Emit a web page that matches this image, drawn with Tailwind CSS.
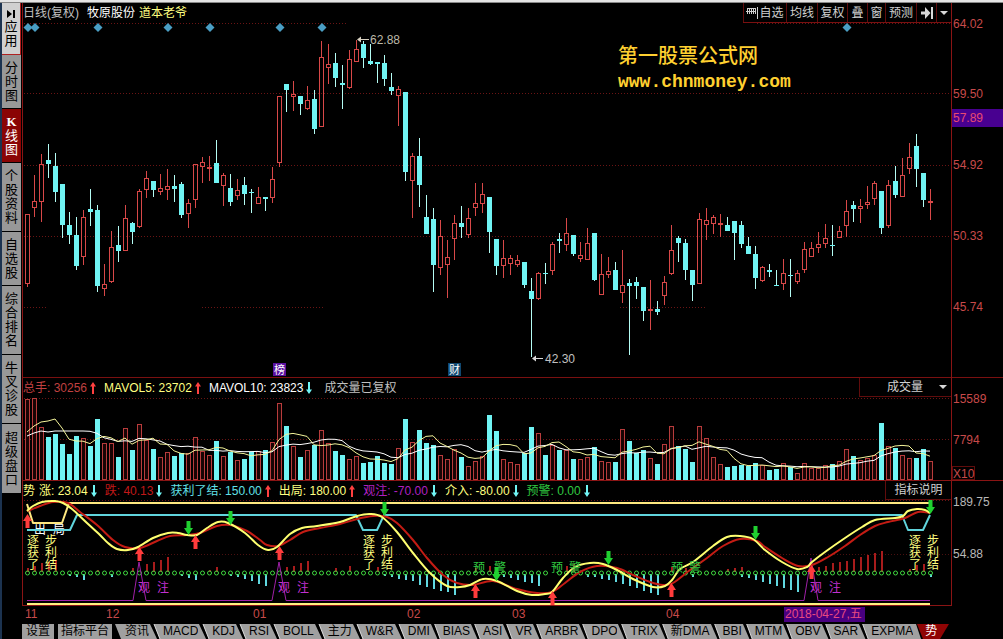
<!DOCTYPE html>
<html lang="zh-CN">
<head>
<meta charset="utf-8">
<meta name="viewport" content="width=device-width, initial-scale=1">
<title>牧原股份 日线</title>
<script src="https://cdn.jsdelivr.net/npm/@tailwindcss/browser@4"></script>
</head>
<body class="min-h-screen bg-black font-['Liberation_Sans','Noto_Sans_CJK_SC',sans-serif] text-xs text-[#c0c0c0]">
<svg class="hidden" aria-hidden="true">
  <symbol id="up" viewBox="0 0 6 12"><path d="M3 0L6 4.5H4V12H2V4.5H0Z" fill="#ff4040"/></symbol>
  <symbol id="down" viewBox="0 0 6 12"><path d="M3 12L6 7.5H4V0H2V7.5H0Z" fill="#70f4f4"/></symbol>
  <symbol id="slash" viewBox="0 0 14 15" preserveAspectRatio="none"><path d="M0 0H14V15H0Z" fill="#a0a0a0"/><path d="M1 0H5L11 15H8Z" fill="#000"/><path d="M5 0L11 15" stroke="#ddd" stroke-width="1"/></symbol>
</svg>
<div class="flex min-h-screen flex-col">
  <div class="h-[3px] shrink-0 border-b border-[#888] bg-[#e4e4e4]"></div>
  <div class="flex flex-1">
    <nav class="flex w-[22px] shrink-0 flex-col border-l-2 border-[#1c3350] pr-px text-[13px] leading-[14px] text-black">
      <button class="flex h-[52px] flex-col items-center justify-center border-b border-r border-[#b02020] bg-[#d0d0d0]">
        <svg class="mb-0.5 h-2 w-2" viewBox="0 0 8 8"><path d="M0 0L5 4L0 8ZM6 0H8V8H6Z"/></svg>
        <span class="w-[13px] break-all">应用</span></button>
      <button class="flex h-[54px] items-center justify-center border-b border-black bg-[#989898]"><span class="w-[13px] break-all">分时图</span></button>
      <button class="flex h-[54px] flex-col items-center justify-center border-b border-black bg-[#8a0404] text-white"><span class="font-['Liberation_Serif',serif] font-bold">K</span><span class="w-[13px] break-all">线图</span></button>
      <button class="flex h-[69px] items-center justify-center border-b border-black bg-[#989898]"><span class="w-[13px] break-all">个股资料</span></button>
      <button class="flex h-[54px] items-center justify-center border-b border-black bg-[#989898]"><span class="w-[13px] break-all">自选股</span></button>
      <button class="flex h-[69px] items-center justify-center border-b border-black bg-[#989898]"><span class="w-[13px] break-all">综合排名</span></button>
      <button class="flex h-[69px] items-center justify-center border-b border-black bg-[#989898]"><span class="w-[13px] break-all">牛叉诊股</span></button>
      <button class="flex h-[69px] items-center justify-center bg-[#989898]"><span class="w-[13px] break-all">超级盘口</span></button>
    </nav>
    <main class="flex min-w-0 flex-1 flex-col">
      <header class="flex h-5 items-center">
        <h1 class="flex flex-1 items-center pl-px"><span>日线(复权)</span><span class="ml-2 text-white">牧原股份</span><span class="ml-1 text-[#ffff80]">道本老爷</span></h1>
        <div class="flex h-5 border-b border-r border-[#7a1010] text-[#d0d0d0]">
          <button class="flex w-[43px] items-center justify-center gap-px border-l border-[#600c0c]"><svg class="h-3 w-3" viewBox="0 0 12 12" fill="none" stroke="#d0d0d0"><path d="M1.5 1V7M3.5 1V7M5.5 1V7M7.5 1V7M9.5 1V7M0 4.5H10M1 1.5H10M11.5 0V12"/></svg>自选</button>
          <button class="w-[31px] border-l border-[#600c0c]">均线</button>
          <button class="w-[30px] border-l border-[#600c0c]">复权</button>
          <button class="w-5 border-l border-[#600c0c]">叠</button>
          <button class="w-[18px] border-l border-[#600c0c]">窗</button>
          <button class="w-[31px] border-l border-[#600c0c]">预测</button>
          <button class="flex w-5 items-center justify-center border-l border-[#600c0c]" aria-label="下一个"><svg class="h-3 w-3" viewBox="0 0 12 12"><path d="M0 4.5H4V0L9.5 6L4 12V7.5H0ZM10 0H12V12H10Z" fill="#d8d8d8"/></svg></button>
          <button class="flex w-[15px] items-center justify-center border-l border-[#600c0c]" aria-label="更多"><svg class="h-1 w-2" viewBox="0 0 8 4"><path d="M0 0H8L4 4Z" fill="#d8d8d8"/></svg></button>
        </div>
        <div class="w-[51px] shrink-0"></div>
      </header>
      <svg id="price" class="block h-auto w-full overflow-visible" viewBox="22 23 981 354" role="img" aria-label="K线"></svg>
      <section class="flex h-5 items-center border-t border-[#7a1010]">
        <div class="flex flex-1 items-center gap-2 pl-px">
          <span class="flex items-center gap-[3px] text-[#c04040]">总手: 30256<svg class="h-3 w-1.5"><use href="#up"/></svg></span>
          <span class="flex items-center gap-[3px] text-[#ffff80]">MAVOL5: 23702<svg class="h-3 w-1.5"><use href="#up"/></svg></span>
          <span class="flex items-center gap-[3px] text-white">MAVOL10: 23823<svg class="h-3 w-1.5"><use href="#down"/></svg></span>
          <span class="ml-1">成交量已复权</span>
        </div>
        <button class="flex h-full w-[93px] items-center justify-end gap-4 border-b border-l border-r border-[#600c0c] pr-1 text-[#d0d0d0]">成交量<svg class="h-1 w-2" viewBox="0 0 8 4"><path d="M0 0H8L4 4Z" fill="#d8d8d8"/></svg></button>
        <div class="w-[51px] shrink-0"></div>
      </section>
      <svg id="volume" class="block h-auto w-full overflow-visible" viewBox="22 397 981 84" role="img" aria-label="成交量"></svg>
      <section class="flex h-[19px] items-center">
        <div class="flex flex-1 items-center gap-2 pl-px">
          <span class="-mr-1 text-[#ffff80]">势</span>
          <span class="flex items-center gap-[3px] text-[#ffff80]">涨: 23.04<svg class="h-3 w-1.5"><use href="#down"/></svg></span>
          <span class="flex items-center gap-[3px] text-[#c01818]">跌: 40.13<svg class="h-3 w-1.5"><use href="#down"/></svg></span>
          <span class="flex items-center gap-[3px] text-[#60e0e8]">获利了结: 150.00<svg class="h-3 w-1.5"><use href="#up"/></svg></span>
          <span class="flex items-center gap-[3px] text-[#ffff80]">出局: 180.00<svg class="h-3 w-1.5"><use href="#up"/></svg></span>
          <span class="flex items-center gap-[3px] text-[#b020c0]">观注: -70.00<svg class="h-3 w-1.5"><use href="#down"/></svg></span>
          <span class="flex items-center gap-[3px] text-[#ffff80]">介入: -80.00<svg class="h-3 w-1.5"><use href="#down"/></svg></span>
          <span class="flex items-center gap-[3px] text-[#30c840]">预警: 0.00<svg class="h-3 w-1.5"><use href="#down"/></svg></span>
        </div>
        <button class="h-full w-[67px] border-b border-l border-r border-[#600c0c] text-[#d0d0d0]">指标说明</button>
        <div class="w-[51px] shrink-0"></div>
      </section>
      <svg id="trend" class="block h-auto w-full overflow-visible" viewBox="22 500 981 124" role="img" aria-label="势"></svg>
      <nav id="tabs" class="flex h-[15px] shrink-0 items-stretch overflow-hidden whitespace-nowrap leading-[15px] text-black">
        <button class="w-8 bg-[#a0a0a0]">设置</button>
        <button class="ml-1 w-[54px] bg-[#a0a0a0]">指标平台</button>
      </nav>
    </main>
  </div>
</div>
<script>
const NS = 'http://www.w3.org/2000/svg';
const RED = '#d84848', CYAN = '#70f4f4';
function add(svg, tag, attrs, text) {
  const e = document.createElementNS(NS, tag);
  for (const k in attrs) e.setAttribute(k, attrs[k]);
  if (text) e.textContent = text;
  svg.appendChild(e);
  return e;
}
const X = i => 27 + 7 * i;
const box = (s, x, y, w, h, fill) => add(s, 'rect', {x, y, width: w, height: h, fill, 'shape-rendering': 'crispEdges'});
const label = (s, x, y, t, fill, size = 12) => add(s, 'text', {x, y, fill, 'font-size': size}, t);
const dotted = (s, y, c = '#6a1414') => add(s, 'path', {d: `M24 ${y + .5}H952`, stroke: c, 'stroke-dasharray': '1 2', 'shape-rendering': 'crispEdges'});
const frame = (s, y1, y2) => { box(s, 22, y1, 1, y2 - y1, '#8a1414'); box(s, 951, y1, 1, y2 - y1, '#8a1414'); };

// colour (1 = up/red, 0 = down/cyan), high, body top, body bottom, low
const K = `1 214 214 284 287,1 175 201 208 217,1 154 164 202 222,0 144 160 164 178,0 153 166 192 202,0 184 184 225 238,0 212 225 235 244,0 217 235 266 270,1 210 217 257 265,0 189 209 212 226,0 205 210 286 292,1 264 284 289 296,1 231 247 282 283,0 226 245 251 262,1 205 218 251 251,0 222 223 232 244,1 189 191 227 228,1 171 178 190 198,0 181 181 190 197,1 174 188 192 195,1 169 186 190 200,0 175 186 189 202,0 182 184 215 218,1 199 203 214 228,1 164 164 200 208,1 157 162 167 183,1 156 167 169 181,0 140 163 183 183,1 173 175 186 206,0 174 188 202 206,1 179 190 196 200,0 177 185 194 205,0 189 192 193 213,1 187 197 204 204,0 197 197 199 211,1 167 179 198 203,1 96 96 163 167,0 84 84 90 112,1 81 94 97 111,0 96 96 104 115,1 86 100 109 110,0 90 99 129 134,1 41 57 127 127,1 44 64 68 84,0 53 63 78 87,0 65 83 85 109,1 50 59 88 89,1 40 49 62 62,0 41 44 58 68,0 44 61 64 65,0 62 62 64 83,0 55 63 79 86,0 73 87 91 95,1 86 89 96 126,0 92 92 172 181,1 153 156 181 218,0 138 156 185 207,0 195 217 234 234,0 208 219 265 292,1 220 236 268 275,1 240 257 265 298,1 215 223 239 260,0 206 223 227 238,1 208 218 235 238,1 183 203 208 216,1 183 194 204 213,0 197 197 232 253,0 239 239 266 275,1 240 258 266 278,1 255 258 264 275,1 255 260 265 267,0 262 262 285 288,0 278 291 299 357,1 272 273 299 300,0 263 273 274 284,1 242 244 271 275,0 233 239 241 253,1 218 233 245 251,0 235 235 254 256,1 242 255 259 262,1 228 243 260 260,0 233 233 280 281,1 254 274 295 295,1 257 271 275 278,0 262 270 290 290,1 250 285 293 303,0 279 283 286 355,0 277 282 286 299,0 287 287 311 321,1 280 309 311 330,0 301 309 312 315,1 276 282 296 305,1 225 250 274 275,0 236 238 243 262,0 239 243 270 280,0 270 270 285 301,1 213 219 284 284,1 208 220 225 240,1 215 217 224 234,1 214 223 225 237,0 217 225 231 231,0 221 221 233 260,0 221 225 244 248,0 237 246 254 254,0 246 254 278 289,1 266 267 281 282,0 264 270 272 277,0 270 285 286 286,1 259 273 284 290,0 259 275 276 297,1 270 273 282 284,1 242 249 270 273,1 242 248 257 257,1 232 244 248 253,1 224 238 244 248,0 225 245 246 256,1 226 231 238 238,1 200 211 226 237,0 201 205 209 222,1 199 206 209 223,1 186 202 205 209,1 181 183 199 205,0 191 191 228 234,1 180 185 226 228,0 166 181 195 198,1 158 175 197 197,1 143 157 169 174,0 134 146 169 187,0 173 173 200 207,1 189 201 203 220`.split(',').map(r => r.split(' ').map(Number));
const V = [399,398,427,437,434,444,454,436,438,446,419,443,443,457,428,450,424,440,449,457,452,456,453,453,437,451,455,441,456,452,460,459,452,451,450,442,403,426,446,457,450,445,430,443,451,455,459,456,463,462,456,463,464,448,419,442,430,443,445,455,459,449,457,466,461,456,415,431,459,462,464,453,427,433,455,445,450,450,459,459,457,447,461,462,462,429,441,453,450,458,464,444,426,446,449,462,426,438,457,464,467,466,465,466,463,465,470,469,463,467,473,463,468,468,465,464,461,449,456,460,458,455,423,446,448,455,458,458,449,461];

// price panel
const P = document.getElementById('price');
[93, 165, 236].forEach(y => dotted(P, y));
add(P, 'path', {d: 'M24 23.5H347M757 23.5H952M24 307.5H46M202 307.5H324M620 307.5H706', stroke: '#6a1414', 'stroke-dasharray': '1 2'});
frame(P, 3, 377);
[28, 35, 98, 168, 210, 280, 322, 847].forEach(x => add(P, 'path', {d: `M${x} 23L${x + 4.5} 27.5L${x} 32L${x - 4.5} 27.5Z`, fill: '#4a9ec4'}));
K.forEach(([up, h, t, b, l], i) => {
  const x = X(i);
  if (up) {
    box(P, x, h, 1, t - h, RED);
    box(P, x, b, 1, l - b, RED);
    if (b - t < 3) box(P, x - 2, t, 5, 2, RED);
    else add(P, 'rect', {x: x - 1.5, y: t + .5, width: 4, height: b - t - 1, fill: 'none', stroke: RED, 'shape-rendering': 'crispEdges'});
  } else {
    box(P, x, h, 1, l - h, '#b4fcf4');
    box(P, x - 2, t, 5, b - t, CYAN);
  }
});
add(P, 'path', {d: 'M357 39.5L361 36.5V42.5ZM360 39H369V40H360Z', fill: '#d8d0c0'});
label(P, 370, 44, '62.88', '#bcb8a8');
add(P, 'path', {d: 'M532 358.5L536 355.5V361.5ZM535 358H543V359H535Z', fill: '#d8d8d8'});
label(P, 545, 363, '42.30', '#c0c0c0');
box(P, 273, 363, 13, 13, '#5a10a0'); label(P, 274, 374, '榜', '#ffffff', 11);
box(P, 448, 363, 13, 13, '#104870'); label(P, 449, 374, '财', '#ffffff', 11);
add(P, 'text', {x: 618, y: 63, fill: '#ffd030', 'font-size': 20, 'font-weight': 500, 'font-family': '"Noto Sans CJK SC",sans-serif'}, '第一股票公式网');
add(P, 'text', {x: 618, y: 87, fill: '#ffd030', 'font-size': 18, 'font-weight': 700, 'font-family': '"Liberation Mono",monospace'}, 'www.chnmoney.com');
[[28, '64.02'], [98, '59.50'], [169, '54.92'], [240, '50.33'], [311, '45.74']].forEach(([y, t]) => label(P, 953, y, t, '#c84a4a'));
box(P, 952, 109, 51, 18, '#480090'); label(P, 953, 122, '57.89', '#e84a70');

// volume panel
const W = document.getElementById('volume');
dotted(W, 398); dotted(W, 439);
frame(W, 377, 481);
V.forEach((t, i) => {
  const x = X(i);
  if (K[i][0]) add(W, 'rect', {x: x - 1.5, y: t + .5, width: 4, height: 479 - t, fill: '#180404', stroke: '#b83c3c', 'shape-rendering': 'crispEdges'});
  else box(W, x - 2, t, 5, 480 - t, CYAN);
});
const mean = (n, seed) => V.map((_, i) => i < seed.length ? seed[i] : V.slice(i - n + 1, i + 1).reduce((a, b) => a + b) / n);
const line = (s, ys, stroke) => add(s, 'polyline', {points: ys.map((y, i) => X(i) + ',' + y.toFixed(1)).join(' '), fill: 'none', stroke});
line(W, mean(10, [436, 433, 431, 432, 431, 431, 431, 431, 431]), '#ffffff');
line(W, mean(5, [432, 426, 422, 421]), '#f4f49a');
box(W, 22, 480, 981, 1, '#8a1414');
label(W, 953, 403, '15589', '#c84a4a');
label(W, 953, 444, '7794', '#c84a4a');
add(W, 'rect', {x: 952.5, y: 466.5, width: 22, height: 13, fill: 'none', stroke: '#600c0c'});
label(W, 953, 478, 'X10', '#c84a4a');

// trend panel
const T = document.getElementById('trend');
dotted(T, 500); dotted(T, 554, '#4a1010');
frame(T, 481, 605);
box(T, 22, 605, 930, 1, '#8a1414');
label(T, 34, 534, '出', '#ffffff'); label(T, 53, 534, '局', '#ffffff');
const up = {0:568,1:566,2:563,3:562,4:560,10:570,15:568,17:564,18:562,19:560,20:557,26:570,27:567,37:567,38:566,39:563,40:561,44:568,46:566,50:567,64:568,66:566,77:566,78:564,92:567,94:568,100:569,101:568,102:567,113:567,114:566,115:563,116:562,117:561,118:559,119:557,120:555,121:553,122:551,126:569,127:565,128:564};
const dn = {6:576,7:577,8:580,12:577,22:576,23:578,24:580,29:576,30:577,31:579,32:581,33:584,34:586,51:576,52:577,53:579,54:580,55:581,56:585,57:587,58:589,59:591,60:592,61:595,68:577,69:578,70:580,71:582,72:583,73:586,80:577,81:577,82:579,83:580,84:582,85:584,86:586,87:588,88:591,89:593,90:595,95:577,102:577,103:578,104:580,105:582,106:584,107:586,108:588,109:590,110:592,129:577};
for (const i in up) box(T, X(+i), up[i], 2, 572 - up[i], '#a81c1c');
for (const i in dn) box(T, X(+i), 574, 2, dn[i] - 574, '#60d8e0');
for (let i = 0; i < 130; i++) if (i !== 75 && i !== 93) add(T, 'circle', {cx: X(i) + .5, cy: 573, r: 2, fill: 'none', stroke: '#40d840'});
const poly = (pts, stroke, w) => add(T, 'polyline', {points: pts, fill: 'none', stroke, 'stroke-width': w, 'stroke-linejoin': 'round'});
poly('27,504 33,523 62,523 69,503 930,503', '#ffe880', 2);
poly('27,530 70,530 77,515 356,515 363,530 377,530 384,515 902,515 908,530 923,530 930,515', '#60d4dc', 2);
poly('27,600.5 133,600.5 139,562 146,600.5 272,600.5 279,562 286,600.5 804,600.5 811,558 818,600.5 930,600.5', '#a020a8', 1);
poly('27,604 930,604', '#fff080', 2);
const curve = (s, c) => {
  const p = s.split(' ').map(q => q.split(',').map(Number));
  let d = 'M' + p[0];
  for (let i = 0; i < p.length - 1; i++) {
    const a = p[Math.max(i - 1, 0)], b = p[i], e = p[i + 1], f = p[Math.min(i + 2, p.length - 1)];
    d += `C${b[0] + (e[0] - a[0]) / 6} ${b[1] + (e[1] - a[1]) / 6} ${e[0] - (f[0] - b[0]) / 6} ${e[1] - (f[1] - b[1]) / 6} ${e[0]} ${e[1]}`;
  }
  add(T, 'path', {d, fill: 'none', stroke: c, 'stroke-width': 2});
};
curve('27,511 30,510 40,506 53,502 68,503 80,512 97,525 113,540 125,547 140,548 157,541 170,536 187,535 200,533 217,526 230,525 247,531 260,540 267,545 278,546 290,540 303,532 320,528 340,524 357,519 373,516 387,517 397,523 413,540 427,558 443,575 457,583 473,585 493,581 517,589 537,593 552,592 565,583 580,572 597,566 617,568 633,575 650,582 663,585 673,583 690,570 707,558 723,546 740,539 757,541 765,547 782,558 798,566 812,565 828,557 845,546 860,535 875,526 888,522 905,518 918,512 930,513', '#c41c14');
curve('27,511 33,506 42,502 55,501 63,503 72,509 87,523 100,535 108,543 117,549 128,550 138,547 153,538 168,533 178,533 187,535 197,535 207,528 218,522 228,523 245,533 258,545 268,550 277,547 290,534 302,528 317,526 340,522 357,516 370,514 382,517 397,532 413,553 430,573 447,586 460,587 470,585 483,579 497,581 517,591 532,595 545,594 552,592 563,578 575,567 590,563 603,564 617,570 633,579 653,587 665,586 672,580 680,569 693,562 713,546 727,537 740,536 753,539 765,550 782,562 797,569 807,567 812,562 825,552 845,538 862,527 875,520 895,518 903,516 908,511 917,509 925,510 930,513', '#ffff70');
[27, 363, 909].forEach(x => {
  [...'逐获了'].forEach((c, i) => label(T, x, 545 + i * 12, c, '#ffff80'));
  [...'步利结'].forEach((c, i) => label(T, x + 18, 545 + i * 12, c, '#ffff80'));
});
[138, 278, 810].forEach(x => { label(T, x, 592, '观', '#c030d0'); label(T, x + 19, 592, '注', '#c030d0'); });
[[473, 494], [551, 569], [671, 689]].forEach(([a, b]) => { label(T, a, 572, '预', '#30c840'); label(T, b, 572, '警', '#30c840'); });
[[27,514],[139,547],[195,535],[279,546],[475,584],[552,591],[671,583],[811,565]].forEach(([x, y]) =>
  add(T, 'path', {d: `M${x + .5} ${y}L${x + 5} ${y + 7}H${x + 2.5}V${y + 14}H${x - 1.5}V${y + 7}H${x - 4}Z`, fill: '#ff3c3c'}));
[[188,521],[230,511],[384,502],[496,567],[608,551],[755,526],[930,500]].forEach(([x, y]) =>
  add(T, 'path', {d: `M${x + .5} ${y + 14}L${x + 5} ${y + 7}H${x + 2.5}V${y}H${x - 1.5}V${y + 7}H${x - 4}Z`, fill: '#20d030'}));
label(T, 953, 506, '189.75', '#b8b8b8');
label(T, 953, 558, '54.88', '#b8b8b8');
[[25, '11'], [106, '12'], [253, '01'], [407, '02'], [512, '03'], [666, '04']].forEach(([x, t]) => label(T, x, 618, t, '#c84a4a'));
box(T, 784, 607, 81, 15, '#480080');
label(T, 785, 618, '2018-04-27,五', '#e84a80');

// indicator tabs
const tabs = document.getElementById('tabs');
const names = ['资讯','MACD','KDJ','RSI','BOLL','主力','W&R','DMI','BIAS','ASI','VR','ARBR','DPO','TRIX','新DMA','BBI','MTM','OBV','SAR','EXPMA'];
tabs.insertAdjacentHTML('beforeend', '<svg class="h-[15px] w-[13px] shrink-0" viewBox="0 0 13 15"><path d="M3 0H13V15H9Z" fill="#a0a0a0"/></svg>');
names.forEach((n, i) => {
  const b = document.createElement('button');
  b.className = 'bg-[#a0a0a0]';
  b.textContent = n;
  tabs.appendChild(b);
  if (i < names.length - 1) tabs.insertAdjacentHTML('beforeend', i < 7
    ? '<svg class="h-[15px] w-3.5 shrink-0"><use href="#slash"/></svg>'
    : '<svg class="h-[15px] w-[13px] shrink-0"><use href="#slash"/></svg>');
});
tabs.insertAdjacentHTML('beforeend', '<svg class="h-[15px] w-3 shrink-0" viewBox="0 0 12 15"><path d="M0 0H3L8 15H0Z" fill="#a0a0a0"/><path d="M4 0H12V15H10Z" fill="#900404"/></svg><button class="bg-[#900404] text-white">势</button><svg class="h-[15px] w-3 shrink-0" viewBox="0 0 12 15"><path d="M0 0H12L3 15H0Z" fill="#900404"/></svg>');
</script>
</body>
</html>
